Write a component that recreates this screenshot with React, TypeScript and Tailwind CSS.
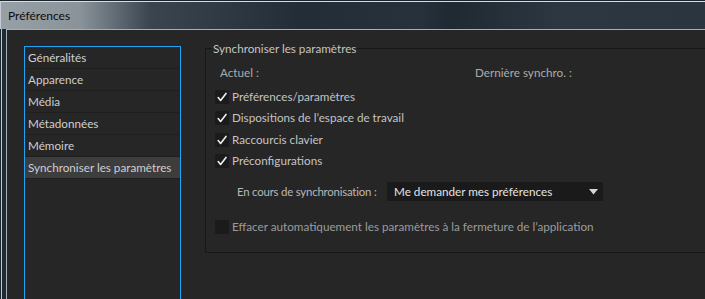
import React from "react";

const navItems = [
  "Généralités",
  "Apparence",
  "Média",
  "Métadonnées",
  "Mémoire",
  "Synchroniser les paramètres",
];

const syncItems = [
  "Préférences/paramètres",
  "Dispositions de l’espace de travail",
  "Raccourcis clavier",
  "Préconfigurations",
];

const font = { fontFamily: "Lato, 'Noto Sans', sans-serif" };

const CheckBox = ({ checked }: { checked: boolean }) => (
  <div className="w-[14px] h-[14px] bg-[#1b1b1b] flex items-center justify-center shrink-0">
    {checked && (
      <svg width="12" height="12" viewBox="0 0 12 12">
        <path
          d="M2.2 6.6 L4.6 9.4 L10 2.4"
          fill="none"
          stroke="#f0f0f0"
          strokeWidth="1.6"
          strokeLinecap="round"
          strokeLinejoin="round"
        />
      </svg>
    )}
  </div>
);

export default function App() {
  return (
    <div
      className="w-[705px] h-[299px] overflow-hidden flex flex-col bg-[#1c2631] text-[11.7px]"
      style={font}
    >
      {/* title bar */}
      <div className="h-[29px] shrink-0 border-t border-[#1a232c] bg-[linear-gradient(to_right,#98a0a7_0px,#8a939a_80px,#3a4550_150px,#222d37_300px,#26313b_420px,#1e2932_450px,#2c3741_560px,#2a353f_705px)] flex">
        <div className="w-[1px] bg-[#c4cbd2]"></div>
        <div className="flex-1 border-t border-[#d9dde1] pl-[7px] pt-[5px] text-[12px] text-[#0c0c0c]">
          Préférences
        </div>
      </div>

      {/* body */}
      <div className="flex flex-1 min-h-0">
        <div className="w-[7px] shrink-0 bg-[linear-gradient(to_right,#1b2530_0px,#1b2530_1px,#bfc6cd_1px,#bfc6cd_2px,#1e2a35_2px,#1e2a35_6px,#a8aeb4_6px)]"></div>
        <div className="flex-1 bg-[#262626] border-t border-[#a8aeb4] flex pl-[17px] pt-[16px]">
          {/* left list */}
          <div className="w-[157px] h-[300px] border border-[#1fa3f2] shrink-0">
            {navItems.map((item, i) => (
              <div
                key={item}
                className={
                  "h-[22px] flex items-center pl-[3px] border-b border-[#1f1f1f] text-[#cfcfcf] " +
                  (i === navItems.length - 1 ? "bg-[#3d3d3d]" : "")
                }
              >
                {item}
              </div>
            ))}
          </div>

          {/* right group */}
          <div className="ml-[24px] mt-[2px] w-[600px] h-[205px] border border-[#181818] border-r-0 relative shrink-0">
            <div className="absolute left-[6px] top-[-9px] px-[1px] bg-[#262626] text-[#c4c4c4] leading-[16px]">
              Synchroniser les paramètres
            </div>

            <div className="flex pt-[15px] pl-[14px] text-[#ababab]">
              <div className="w-[255px]">Actuel :</div>
              <div>Dernière synchro. :</div>
            </div>

            <div className="flex flex-col pl-[9px] pt-[8px] gap-[7.5px] text-[#c4c4c4]">
              {syncItems.map((s) => (
                <div key={s} className="flex items-center gap-[3px] h-[14px]">
                  <CheckBox checked />
                  <span>{s}</span>
                </div>
              ))}
            </div>

            <div className="flex items-center pl-[31px] mt-[14px]">
              <span className="text-[11.4px] tracking-[-0.2px] text-[#b8b8b8] w-[150px]">
                En cours de synchronisation :
              </span>
              <div className="w-[216px] h-[19px] bg-[#1a1a1a] flex items-center justify-between pl-[7px] pr-[5px] text-[#e4e4e4]">
                <span>Me demander mes préférences</span>
                <svg width="9" height="6" viewBox="0 0 9 6">
                  <path d="M0 0 H9 L4.5 5.5 Z" fill="#d4d4d4" />
                </svg>
              </div>
            </div>

            <div className="flex items-center gap-[3px] pl-[9px] mt-[17px] text-[#9c9c9c]">
              <CheckBox checked={false} />
              <span>Effacer automatiquement les paramètres à la fermeture de l’application</span>
            </div>
          </div>
        </div>
      </div>
    </div>
  );
}
